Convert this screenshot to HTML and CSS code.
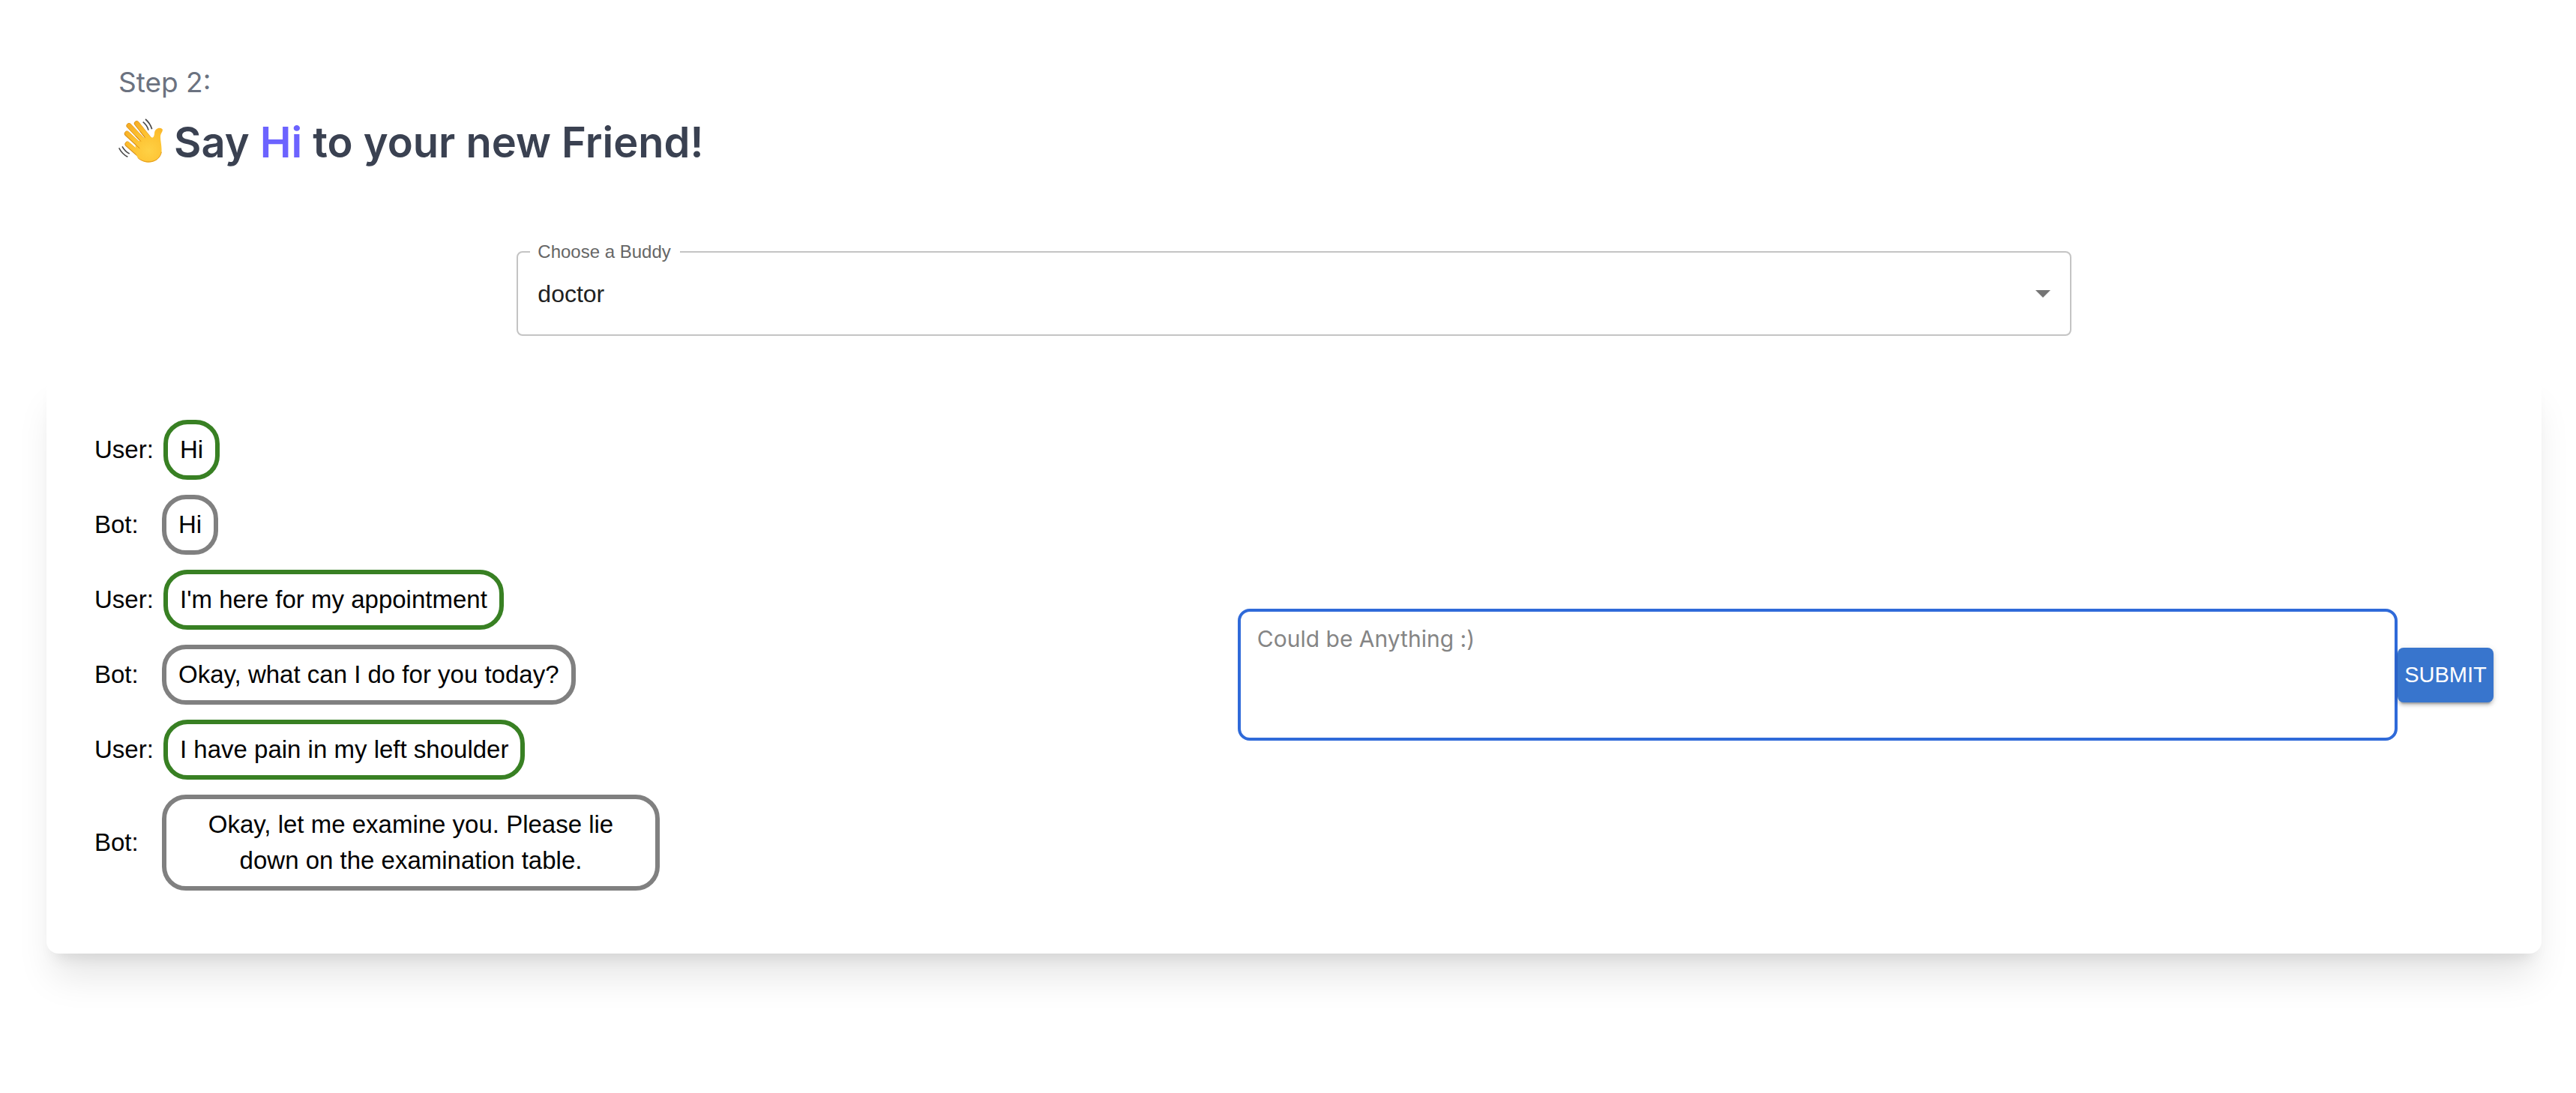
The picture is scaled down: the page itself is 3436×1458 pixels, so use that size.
FILE: index.html
```html
<!DOCTYPE html>
<html lang="en">
<head>
  <meta charset="UTF-8">
  <meta name="viewport" content="width=device-width, initial-scale=1.0">
  <title>Say Hi to your new Friend!</title>
  <link rel="stylesheet" href="styles.css">
</head>
<body>
  <main class="page">
    <header class="intro">
      <p class="step">Step 2:</p>
      <h1 class="title">
        <svg class="wave" viewBox="24 21 180 180" aria-hidden="true">
          <defs>
            <radialGradient id="skin" gradientUnits="userSpaceOnUse" cx="145" cy="150" r="125">
              <stop offset="0" stop-color="#ffd145"/>
              <stop offset="0.6" stop-color="#fdc02f"/>
              <stop offset="1" stop-color="#f6ae25"/>
            </radialGradient>
          </defs>
          <!-- fingers -->
          <path d="M97 41 L148 105 M66 50 L125 112 M58 82 L112 132 M60 124 L110 168" fill="none" stroke="#d58b14" stroke-width="21" stroke-linecap="round"/>
          <path d="M98 41 L149 105 M67 50 L126 112 M59 81 L113 131 M61 123 L111 167" fill="none" stroke="url(#skin)" stroke-width="18" stroke-linecap="round"/>
          <!-- palm and thumb -->
          <path d="M92 128 L100 116 L116 104 L138 90 L154 96 C164 101 167 92 168 80 C170 61 188 55 199 63 C205 70 193 79 192 91 C191 110 199 132 196 158 C188 185 167 197 142 197 C124 196 110 186 100 176 L92 160Z" fill="url(#skin)"/>
          <path d="M90 123 L108 140 M94 92 L113 112 M112 75 L130 97" fill="none" stroke="#d98a12" stroke-width="3" stroke-linecap="round"/>
          <path d="M101 178 C126 204 188 202 196 155" fill="none" stroke="#e39a1d" stroke-width="3"/>
          <path d="M122 35 Q139 48 144 68 M132 24 Q151 40 158 64 M26 139 Q39 164 61 175 M39 133 Q50 153 68 162" fill="none" stroke="#4a4a4a" stroke-width="5"/>
        </svg>
        Say <span class="hi">Hi</span> to your new Friend!
      </h1>
    </header>

    <fieldset class="buddy">
      <legend><label for="buddy">Choose a Buddy</label></legend>
      <select id="buddy">
        <option>doctor</option>
      </select>
      <svg class="arrow" viewBox="0 0 20 10" aria-hidden="true"><path d="M0 0h20L10 10z"/></svg>
    </fieldset>

    <section class="card">
      <ul class="chat">
        <li class="user"><span class="name">User:</span><p class="bubble">Hi</p></li>
        <li class="bot"><span class="name">Bot:</span><p class="bubble">Hi</p></li>
        <li class="user"><span class="name">User:</span><p class="bubble">I'm here for my appointment</p></li>
        <li class="bot"><span class="name">Bot:</span><p class="bubble">Okay, what can I do for you today?</p></li>
        <li class="user"><span class="name">User:</span><p class="bubble">I have pain in my left shoulder</p></li>
        <li class="bot"><span class="name">Bot:</span><p class="bubble">Okay, let me examine you. Please lie down on the examination table.</p></li>
      </ul>
      <form class="message">
        <textarea aria-label="Message" placeholder="Could be Anything :)"></textarea>
        <button type="submit">SUBMIT</button>
      </form>
    </section>
  </main>
</body>
</html>
```
FILE: styles.css
```css
* {
  box-sizing: border-box;
}
body {
  margin: 0;
  background-color: #fff;
  color: #000;
  font-family: "Liberation Sans", Arial, sans-serif;
  font-size: 32px;
  line-height: 48px;
}
.page {
  padding: 82px 46px 80px 62px;
}

/* heading */
.intro {
  padding: 0 96px;
  font-family: Inter, sans-serif;
}
.step {
  margin: 0 0 16px;
  color: #6b7280;
  font-size: 37px;
  line-height: 56px;
}
.title {
  margin: 0;
  color: #3a4151;
  font-size: 56px;
  font-weight: 600;
  line-height: 72px;
}
.wave {
  width: 60px;
  height: 60px;
  vertical-align: -8px;
}
.hi {
  color: #6c63ff;
}

/* buddy select */
.buddy {
  display: flex;
  align-items: center;
  width: 62.3%;
  margin: 98px auto 48px;
  padding: 0;
  border: 2px solid #c4c4c4;
  border-radius: 8px;
}
.buddy legend {
  margin-left: 16px;
  padding: 0 12px 0 10px;
  color: #666;
  font-size: 24px;
  line-height: 24px;
}
.buddy select {
  flex: 1;
  height: 98px;
  padding: 0 64px 10px 26px;
  border: 0;
  background: none;
  color: #212121;
  font: inherit;
  appearance: none;
}
.arrow {
  width: 20px;
  height: 10px;
  margin: 0 26px 10px -46px;
  fill: #757575;
  pointer-events: none;
}

/* chat card */
.card {
  display: flex;
  align-items: center;
  justify-content: space-between;
  padding: 64px;
  border-radius: 16px;
  background-color: #fff;
  box-shadow: 0 40px 50px -10px rgba(0, 0, 0, 0.1), 0 16px 20px -12px rgba(0, 0, 0, 0.1);
}
.chat {
  margin: 0;
  padding: 0;
  list-style: none;
  font-size: 33px;
}
.chat li {
  display: flex;
  align-items: center;
  margin-bottom: 20px;
}
.name {
  flex: none;
  width: 90px;
}
.user .name {
  width: 92px;
}
.bubble {
  max-width: 664px;
  margin: 0;
  padding: 10px 16px;
  border: 6px solid gray;
  border-radius: 32px;
  text-align: center;
}
.user .bubble {
  border-color: #388023;
}

/* message form */
.message {
  display: flex;
  align-items: center;
  width: 52.35%;
  padding-top: 32px;
}
.message textarea {
  flex: 1;
  height: 176px;
  padding: 12px 22px;
  border: 4px solid #2f6ad9;
  border-radius: 16px;
  background-color: #fff;
  font-family: Inter, sans-serif;
  font-size: 30px;
  line-height: 48px;
  resize: none;
}
.message textarea::placeholder {
  color: #858585;
  opacity: 1;
}
.message button {
  width: 128px;
  height: 73px;
  padding: 0;
  border: 0;
  border-radius: 8px;
  background-color: #3875cd;
  color: #fff;
  font-family: inherit;
  font-size: 29px;
  box-shadow: 0 6px 2px -4px rgba(0, 0, 0, 0.2), 0 4px 4px rgba(0, 0, 0, 0.14), 0 2px 10px rgba(0, 0, 0, 0.12);
}
```
